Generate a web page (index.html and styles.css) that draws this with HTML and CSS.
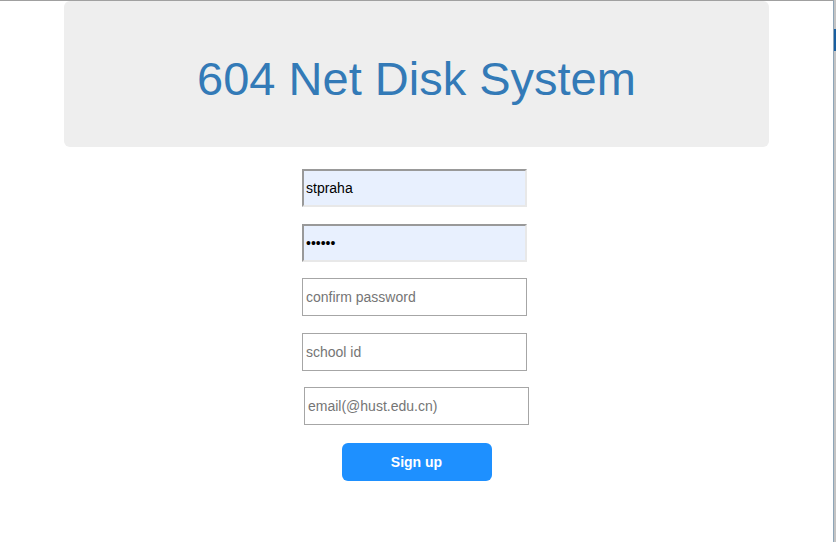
FILE: index.html
```html
<!DOCTYPE html>
<html>
<head>
<meta charset="utf-8">
<link rel="stylesheet" href="styles.css">
</head>
<body>
<div class="frame">
  <div class="page">
    <div class="jumbotron">
      <h1 class="title">604 Net Disk System</h1>
    </div>
    <form class="form">
      <input class="field autofill" type="text" value="stpraha">
      <input class="field autofill" type="password" value="123456">
      <input class="field" type="password" placeholder="confirm password">
      <input class="field" type="text" placeholder="school id">
      <input class="field email" type="text" placeholder="email(@hust.edu.cn)">
      <button class="btn" type="button">Sign up</button>
    </form>
  </div>
  <div class="rail"><div class="thumb"></div></div>
</div>
</body>
</html>
```

FILE: styles.css
```css
html, body {
  margin: 0;
  padding: 0;
  background: #ffffff;
  font-family: "Liberation Sans", Arial, sans-serif;
}
.frame {
  display: flex;
  height: 542px;
}
.page {
  flex: 1;
  border-top: 1px solid #a0a0a0;
  border-right: 1px solid #8ea5b8;
  display: flex;
  flex-direction: column;
}
.rail {
  width: 2px;
  background: #c4c4c4;
  display: flex;
  flex-direction: column;
}
.thumb {
  margin-top: 29px;
  height: 22px;
  background: #1a5fa0;
}
.jumbotron {
  margin-left: 64px;
  width: 705px;
  height: 146px;
  background: #eeeeee;
  border-radius: 6px;
  display: flex;
  align-items: center;
  justify-content: center;
}
.title {
  margin: 0;
  font-weight: normal;
  font-size: 47px;
  color: #337ab7;
  line-height: 1;
  padding-top: 9px;
}
.form {
  margin-top: 22px;
  display: flex;
  flex-direction: column;
  align-items: center;
  gap: 16.5px;
}
.field {
  box-sizing: border-box;
  width: 225px;
  height: 38px;
  margin: 0 4px 0 0;
  padding: 1px 3px;
  font-family: "Liberation Sans", Arial, sans-serif;
  font-size: 14px;
  color: #000;
  background: #fff;
  border: 1px solid #a6a6a6;
  outline: none;
}
.field::placeholder {
  color: #757575;
}
.field.autofill {
  padding: 1px 2px;
  background: #e8f0fe;
  border: 2px solid;
  border-color: #999999 #e8e8e8 #e8e8e8 #999999;
}
.field.email {
  margin-right: 0;
}
.btn {
  margin-top: 1.5px;
  width: 150px;
  height: 38px;
  border: none;
  border-radius: 6px;
  background: #1e90ff;
  color: #fff;
  font-family: "Liberation Sans", Arial, sans-serif;
  font-weight: bold;
  font-size: 14px;
}
```
